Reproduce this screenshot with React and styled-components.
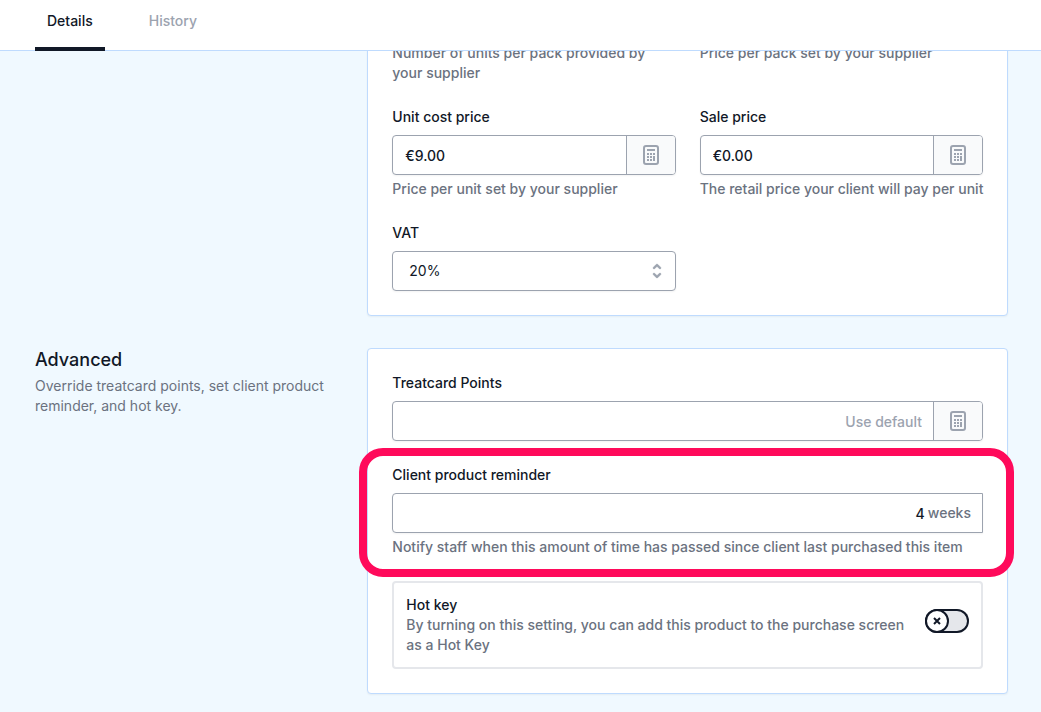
import React, { useState } from "react";
import styled, { createGlobalStyle } from "styled-components";

const CalculatorIcon = () => (
  <svg width="16" height="20" viewBox="0 0 16 20" fill="none" aria-hidden="true">
    <rect x="1" y="1" width="14" height="18" rx="2" stroke="#9ca3af" strokeWidth="2" />
    <path
      fill="#9ca3af"
      d="M4 4h8v2H4zM4 8h2v2H4zM7 8h2v2H7zM10 8h2v2h-2zM4 11h2v2H4zM7 11h2v2H7zM4 14h2v2H4zM7 14h2v2H7zM10 11h2v5h-2z"
    />
  </svg>
);

const SelectorIcon = () => (
  <svg width="20" height="20" viewBox="0 0 20 20" fill="#9ca3af" aria-hidden="true">
    <path
      stroke="#9ca3af"
      strokeWidth="0.4"
      fillRule="evenodd"
      clipRule="evenodd"
      d="M10 3a1 1 0 01.707.293l3 3a1 1 0 01-1.414 1.414L10 5.414 7.707 7.707a1 1 0 01-1.414-1.414l3-3A1 1 0 0110 3zm-3.707 9.293a1 1 0 011.414 0L10 14.586l2.293-2.293a1 1 0 011.414 1.414l-3 3a1 1 0 01-1.414 0l-3-3a1 1 0 010-1.414z"
    />
  </svg>
);

const CrossIcon = () => (
  <svg width="8" height="8" viewBox="0 0 8 8" aria-hidden="true">
    <path d="M1 1l6 6M7 1L1 7" stroke="#111827" strokeWidth="2" />
  </svg>
);

const CalculatorField = (props) => {
  const { id, label, hint, value, placeholder, alignRight } = props;
  return (
    <Field>
      <Label htmlFor={id}>{label}</Label>
      <Control>
        <Input
          id={id}
          defaultValue={value}
          placeholder={placeholder}
          $alignRight={alignRight}
        />
        <CalculatorButton type="button" aria-label={`Calculate ${label}`}>
          <CalculatorIcon />
        </CalculatorButton>
      </Control>
      {hint && <Hint $oneLine>{hint}</Hint>}
    </Field>
  );
};

const App = () => {
  const [hotKey, setHotKey] = useState(false);
  return (
    <>
      <GlobalStyle />
      <Header>
        <Tab href="#details" $active>
          Details
        </Tab>
        <Tab href="#history">History</Tab>
      </Header>

      <Main>
        <Section>
          <Card $tucked>
            <Columns>
              <Hint>Number of units per pack provided by your supplier</Hint>
              <Hint>Price per pack set by your supplier</Hint>
              <CalculatorField
                id="unit-cost"
                label="Unit cost price"
                value="€9.00"
                hint="Price per unit set by your supplier"
              />
              <CalculatorField
                id="sale-price"
                label="Sale price"
                value="€0.00"
                hint="The retail price your client will pay per unit"
              />
              <Field>
                <Label htmlFor="vat">VAT</Label>
                <Control>
                  <Select id="vat" defaultValue="20">
                    <option value="20">20%</option>
                  </Select>
                  <SelectArrow>
                    <SelectorIcon />
                  </SelectArrow>
                </Control>
              </Field>
            </Columns>
          </Card>
        </Section>

        <Section>
          <Intro>
            <h2>Advanced</h2>
            <p>
              Override treatcard points, set client product reminder, and hot
              key.
            </p>
          </Intro>
          <Card>
            <CalculatorField
              id="treatcard-points"
              label="Treatcard Points"
              placeholder="Use default"
              alignRight
            />
            <Field>
              <Label htmlFor="reminder">Client product reminder</Label>
              <Control $squareEnd>
                <Input id="reminder" defaultValue="4" $alignRight />
                <Suffix>weeks</Suffix>
              </Control>
              <Hint>
                Notify staff when this amount of time has passed since client
                last purchased this item
              </Hint>
              <Highlight />
            </Field>
            <HotKey>
              <div>
                <Label htmlFor="hot-key">Hot key</Label>
                <p>
                  By turning on this setting, you can add this product to the
                  purchase screen as a Hot Key
                </p>
              </div>
              <Toggle
                id="hot-key"
                type="button"
                role="switch"
                aria-checked={hotKey}
                $on={hotKey}
                onClick={() => setHotKey(!hotKey)}
              >
                <Knob>
                  <CrossIcon />
                </Knob>
              </Toggle>
            </HotKey>
          </Card>
        </Section>
      </Main>
    </>
  );
};

const GlobalStyle = createGlobalStyle`
  *, *::before, *::after {
    box-sizing: border-box;
  }
  body {
    margin: 0;
    background: #f0f9ff;
    color: #111827;
    font-family: Inter, "Liberation Sans", sans-serif;
    font-size: 14px;
    line-height: 20px;
  }
  h2, p {
    margin: 0;
  }
  input, select, button {
    font: inherit;
    color: inherit;
  }
`;

const Header = styled.nav`
  position: sticky;
  top: 0;
  z-index: 2;
  display: flex;
  gap: 32px;
  padding: 0 35px;
  background: white;
  border-bottom: 1px solid #bfdbfe;
`;

const Tab = styled.a`
  padding: 11px 12px 16px;
  margin-bottom: -1px;
  border-bottom: 4px solid ${(props) => (props.$active ? "#111827" : "transparent")};
  color: ${(props) => (props.$active ? "#111827" : "#9ca3af")};
  font-weight: 500;
  text-decoration: none;
`;

const Main = styled.main`
  display: flex;
  flex-direction: column;
  gap: 32px;
  padding: 0 33px 18px 35px;
`;

const Section = styled.section`
  display: grid;
  grid-template-columns: repeat(3, minmax(0, 1fr));
  column-gap: 24px;
`;

const Intro = styled.div`
  h2 {
    font-size: 18px;
    font-weight: 500;
    line-height: 24px;
  }
  p {
    margin-top: 4px;
    color: #6b7280;
  }
`;

const Card = styled.div`
  grid-column: 2 / span 2;
  display: flex;
  flex-direction: column;
  gap: 24px;
  padding: 24px;
  margin-top: ${(props) => (props.$tucked ? "-33px" : "0")};
  background: white;
  border: 1px solid #bfdbfe;
  border-radius: 4px;
  box-shadow: 0 1px 2px rgba(0, 0, 0, 0.05);
`;

const Columns = styled.div`
  display: grid;
  grid-template-columns: repeat(2, minmax(0, 1fr));
  gap: 24px;
`;

const Field = styled.div`
  position: relative;
`;

const Label = styled.label`
  display: block;
  font-weight: 500;
`;

const Control = styled.div`
  position: relative;
  display: flex;
  height: 40px;
  margin: 8px 0 4px;
  overflow: hidden;
  background: white;
  border: 1px solid #9ca3af;
  border-radius: ${(props) => (props.$squareEnd ? "4px 0 0 4px" : "4px")};
  box-shadow: 0 1px 2px rgba(0, 0, 0, 0.05);

  ${Field} > &:last-child {
    margin-bottom: 0;
  }
`;

const Input = styled.input`
  flex: 1;
  min-width: 0;
  padding: 2px 11px 0 12px;
  border: 0;
  outline: 0;
  background: transparent;
  font-weight: 500;
  text-align: ${(props) => (props.$alignRight ? "right" : "left")};
  &::placeholder {
    color: #9ca3af;
    opacity: 1;
  }
`;

const CalculatorButton = styled.button`
  display: flex;
  align-items: center;
  justify-content: center;
  width: 49px;
  padding: 0;
  background: #f9fafb;
  border: 0;
  border-left: 1px solid #9ca3af;
  cursor: pointer;
`;

const Suffix = styled.span`
  align-self: center;
  margin-left: -8px;
  padding-right: 11px;
  color: #6b7280;
  font-weight: 500;
`;

const Select = styled.select`
  flex: 1;
  appearance: none;
  padding: 0 40px 0 16px;
  background: transparent;
  border: 0;
  outline: 0;
`;

const SelectArrow = styled.span`
  position: absolute;
  top: 9px;
  right: 8px;
  display: flex;
  pointer-events: none;
`;

const Hint = styled.p`
  color: #6b7280;
  font-weight: 500;
  white-space: ${(props) => (props.$oneLine ? "nowrap" : "normal")};
`;

/* callout ring drawn over the card's edges */
const Highlight = styled.div`
  position: absolute;
  inset: -17px -31px -20px -33px;
  border: 8px solid #ff0a5b;
  border-radius: 24px;
  pointer-events: none;
`;

const HotKey = styled.div`
  display: flex;
  align-items: flex-start;
  justify-content: space-between;
  gap: 16px;
  padding: 12px;
  border: 2px solid #e5e7eb;
  border-radius: 4px;
  p {
    color: #6b7280;
    font-weight: 500;
  }
`;

const Toggle = styled.button`
  display: flex;
  flex-shrink: 0;
  justify-content: ${(props) => (props.$on ? "flex-end" : "flex-start")};
  width: 44px;
  height: 24px;
  margin-top: 14px;
  padding: 0;
  background: #e5e7eb;
  border: 0;
  border-radius: 12px;
  box-shadow: inset 0 0 0 2px #111827;
  cursor: pointer;
`;

const Knob = styled.span`
  display: flex;
  align-items: center;
  justify-content: center;
  width: 24px;
  height: 24px;
  background: white;
  border: 2px solid #111827;
  border-radius: 50%;
`;

export default App;
